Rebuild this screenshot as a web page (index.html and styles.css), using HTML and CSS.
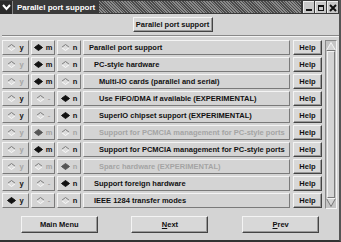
FILE: index.html
```html
<!DOCTYPE html>
<html lang="en">
<head>
    <meta charset="UTF-8">
    <title>Parallel port support</title>
    <link rel="stylesheet" href="styles.css">
</head>
<body>
<svg class="defs" width="0" height="0">
    <symbol id="dia-off" viewBox="0 0 9 7">
        <polygon points="0.5,3.5 4.5,0.5 8.5,3.5 4.5,6.5" fill="#dcdcdc"/>
        <polyline points="0.5,3.5 4.5,0.5 8.5,3.5" fill="none" stroke="#7a7a7a"/>
        <polyline points="0.5,3.5 4.5,6.5 8.5,3.5" fill="none" stroke="#fafafa"/>
    </symbol>
    <symbol id="dia-on" viewBox="0 0 9 7">
        <polygon points="0.5,3.5 4.5,0.5 8.5,3.5 4.5,6.5" fill="currentColor" stroke="currentColor"/>
    </symbol>
</svg>
<div class="window">
    <div class="titlebar">
        <span class="menu-btn">
            <svg width="9" height="7" viewBox="0 0 9 7"><path d="M1 1 L4.5 5 L8 1" fill="none" stroke="#fff" stroke-width="2"/></svg>
        </span>
        <span class="title">Parallel port support</span>
        <span class="hatch"></span>
        <span class="ctl"><svg width="8" height="8" viewBox="0 0 8 8"><rect x="1" y="5" width="6" height="2" fill="#111"/></svg></span>
        <span class="ctl"><svg width="8" height="8" viewBox="0 0 8 8"><rect x="1.5" y="1.5" width="5" height="5" fill="none" stroke="#111"/><rect x="1" y="1" width="6" height="2" fill="#111"/></svg></span>
        <span class="ctl"><svg width="8" height="8" viewBox="0 0 8 8"><path d="M1 1 L7 7 M7 1 L1 7" stroke="#111" stroke-width="2"/></svg></span>
    </div>

    <div class="body">
        <div class="top">
            <div class="btn btn-top">Parallel port support</div>
        </div>
        <div class="sep"></div>

        <div class="main">
            <div class="rows">
                <!-- y / m / n radio cells, label, help -->
                <div class="row">
                    <div class="cell"><svg class="dia"><use href="#dia-off"/></svg><span>y</span></div>
                    <div class="cell"><svg class="dia"><use href="#dia-on"/></svg><span>m</span></div>
                    <div class="cell"><svg class="dia"><use href="#dia-off"/></svg><span>n</span></div>
                    <div class="label lv0">Parallel port support</div>
                    <div class="btn help">Help</div>
                </div>
                <div class="row">
                    <div class="cell off"><svg class="dia"><use href="#dia-off"/></svg><span>y</span></div>
                    <div class="cell"><svg class="dia"><use href="#dia-on"/></svg><span>m</span></div>
                    <div class="cell"><svg class="dia"><use href="#dia-off"/></svg><span>n</span></div>
                    <div class="label lv1">PC-style hardware</div>
                    <div class="btn help">Help</div>
                </div>
                <div class="row">
                    <div class="cell off"><svg class="dia"><use href="#dia-off"/></svg><span>y</span></div>
                    <div class="cell"><svg class="dia"><use href="#dia-on"/></svg><span>m</span></div>
                    <div class="cell"><svg class="dia"><use href="#dia-off"/></svg><span>n</span></div>
                    <div class="label lv2">Multi-IO cards (parallel and serial)</div>
                    <div class="btn help">Help</div>
                </div>
                <div class="row">
                    <div class="cell"><svg class="dia"><use href="#dia-off"/></svg><span>y</span></div>
                    <div class="cell off"><svg class="dia"><use href="#dia-off"/></svg><span>-</span></div>
                    <div class="cell"><svg class="dia"><use href="#dia-on"/></svg><span>n</span></div>
                    <div class="label lv2">Use FIFO/DMA if available (EXPERIMENTAL)</div>
                    <div class="btn help">Help</div>
                </div>
                <div class="row">
                    <div class="cell"><svg class="dia"><use href="#dia-off"/></svg><span>y</span></div>
                    <div class="cell off"><svg class="dia"><use href="#dia-off"/></svg><span>-</span></div>
                    <div class="cell"><svg class="dia"><use href="#dia-on"/></svg><span>n</span></div>
                    <div class="label lv2">SuperIO chipset support (EXPERIMENTAL)</div>
                    <div class="btn help">Help</div>
                </div>
                <div class="row">
                    <div class="cell off"><svg class="dia"><use href="#dia-off"/></svg><span>y</span></div>
                    <div class="cell off"><svg class="dia"><use href="#dia-on"/></svg><span>m</span></div>
                    <div class="cell off"><svg class="dia"><use href="#dia-off"/></svg><span>n</span></div>
                    <div class="label lv2 off">Support for PCMCIA management for PC-style ports</div>
                    <div class="btn help">Help</div>
                </div>
                <div class="row">
                    <div class="cell off"><svg class="dia"><use href="#dia-off"/></svg><span>y</span></div>
                    <div class="cell"><svg class="dia"><use href="#dia-on"/></svg><span>m</span></div>
                    <div class="cell"><svg class="dia"><use href="#dia-off"/></svg><span>n</span></div>
                    <div class="label lv2">Support for PCMCIA management for PC-style ports</div>
                    <div class="btn help">Help</div>
                </div>
                <div class="row">
                    <div class="cell off"><svg class="dia"><use href="#dia-off"/></svg><span>y</span></div>
                    <div class="cell off"><svg class="dia"><use href="#dia-off"/></svg><span>m</span></div>
                    <div class="cell off"><svg class="dia"><use href="#dia-on"/></svg><span>n</span></div>
                    <div class="label lv2 off">Sparc hardware (EXPERIMENTAL)</div>
                    <div class="btn help">Help</div>
                </div>
                <div class="row">
                    <div class="cell"><svg class="dia"><use href="#dia-off"/></svg><span>y</span></div>
                    <div class="cell off"><svg class="dia"><use href="#dia-off"/></svg><span>-</span></div>
                    <div class="cell"><svg class="dia"><use href="#dia-on"/></svg><span>n</span></div>
                    <div class="label lv1">Support foreign hardware</div>
                    <div class="btn help">Help</div>
                </div>
                <div class="row">
                    <div class="cell"><svg class="dia"><use href="#dia-on"/></svg><span>y</span></div>
                    <div class="cell off"><svg class="dia"><use href="#dia-off"/></svg><span>-</span></div>
                    <div class="cell"><svg class="dia"><use href="#dia-off"/></svg><span>n</span></div>
                    <div class="label lv1">IEEE 1284 transfer modes</div>
                    <div class="btn help">Help</div>
                </div>
            </div>

            <div class="scrollbar">
                <svg class="arrow" width="10" height="9" viewBox="0 0 10 9"><path d="M0.5 8.5 L5 0.5 L9.5 8.5 Z" fill="#d4d4d4" stroke="#f4f4f4"/><path d="M9.5 8.5 L0.5 8.5" stroke="#777"/></svg>
                <div class="slider"></div>
                <svg class="arrow" width="10" height="9" viewBox="0 0 10 9"><path d="M0.5 0.5 L5 8.5 L9.5 0.5 Z" fill="#d4d4d4" stroke="#777"/><path d="M0.5 0.5 L9.5 0.5" stroke="#f4f4f4"/></svg>
            </div>
        </div>

        <div class="bottom">
            <div class="btn nav">Main Menu</div>
            <div class="btn nav"><u>N</u>ext</div>
            <div class="btn nav"><u>P</u>rev</div>
        </div>
    </div>
</div>
</body>
</html>
```

FILE: styles.css
```css
:root {
    --bg: #d4d4d4;
    --light: #f4f4f4;
    --dark: #7a7a7a;
    --text: #111;
    --muted: #a4a4a4;
}

body {
    margin: 0;
    background: var(--bg);
    font-family: 'Liberation Sans', Arial, sans-serif;
    font-weight: bold;
    color: var(--text);
}

.defs {
    position: absolute;
}

.window {
    width: 341px;
    height: 242px;
    box-sizing: border-box;
    display: flex;
    flex-direction: column;
    border-right: 2px solid #555;
    border-bottom: 2px solid #333;
}

/* Barra de título */
.titlebar {
    height: 14px;
    display: flex;
    align-items: center;
    background: #3a3a3a;
}

.menu-btn {
    width: 12px;
    height: 13px;
    display: flex;
    align-items: center;
    justify-content: center;
    background: #2a2a2a;
    border-right: 1px solid #888;
}

.title {
    color: #fff;
    font-size: 8px;
    margin-left: 4px;
    margin-right: 4px;
}

.hatch {
    flex: 1;
    align-self: stretch;
    margin: 1px 2px 1px 0;
    background: repeating-linear-gradient(45deg, #8a8a8a 0 1px, #4a4a4a 1px 2px);
}

.ctl {
    width: 10px;
    height: 11px;
    margin-right: 1px;
    display: flex;
    align-items: center;
    justify-content: center;
    background: #c8c8c8;
    border-top: 1px solid #eee;
    border-left: 1px solid #eee;
}

/* Cuerpo */
.body {
    flex: 1;
    display: flex;
    flex-direction: column;
    padding: 3px 0 0 2px;
    font-size: 7.5px;
}

.top {
    display: flex;
    justify-content: center;
    padding-left: 4px;
}

.btn {
    box-sizing: border-box;
    display: flex;
    align-items: center;
    justify-content: center;
    background: #d8d8d8;
    border: 1px solid;
    border-color: var(--light) #444 #444 var(--light);
    box-shadow: inset -1px -1px 0 #999;
}

.btn-top {
    width: 80px;
    height: 15px;
}

.sep {
    height: 0;
    margin: 3px 0 3px;
    border-top: 1px solid #888;
    border-bottom: 1px solid var(--light);
}

.main {
    display: flex;
    gap: 3px;
}

.rows {
    display: flex;
    flex-direction: column;
    gap: 2px;
}

.row {
    display: grid;
    grid-template-columns: 27px 24px 24px 207px 30px;
    column-gap: 2px;
    height: 15px;
}

.row .help {
    margin-left: 1px;
}

.cell,
.label {
    box-sizing: border-box;
    display: flex;
    align-items: center;
    border: 1px solid;
    border-color: var(--light) var(--dark) var(--dark) var(--light);
}

.cell {
    justify-content: center;
    gap: 3px;
}

.cell.off span,
.label.off {
    color: var(--muted);
}

.dia {
    width: 9px;
    height: 7px;
    color: #111;
}

.cell.off .dia {
    color: #555;
}

.lv0 { padding-left: 5px; }
.lv1 { padding-left: 10px; }
.lv2 { padding-left: 15px; }

/* Barra de desplazamiento */
.scrollbar {
    width: 12px;
    height: 169px;
    box-sizing: border-box;
    display: flex;
    flex-direction: column;
    align-items: center;
    border: 1px solid;
    border-color: #888 var(--light) var(--light) #888;
    background: #c4c4c4;
    padding: 1px 0;
}

.slider {
    flex: 1;
    width: 8px;
    box-sizing: border-box;
    background: var(--bg);
    border: 1px solid;
    border-color: var(--light) var(--dark) var(--dark) var(--light);
}

/* Botones inferiores */
.bottom {
    display: grid;
    grid-template-columns: repeat(3, 1fr);
    justify-items: center;
    padding: 7px 3px 0 2px;
}

.nav {
    width: 77px;
    height: 17px;
}
```
